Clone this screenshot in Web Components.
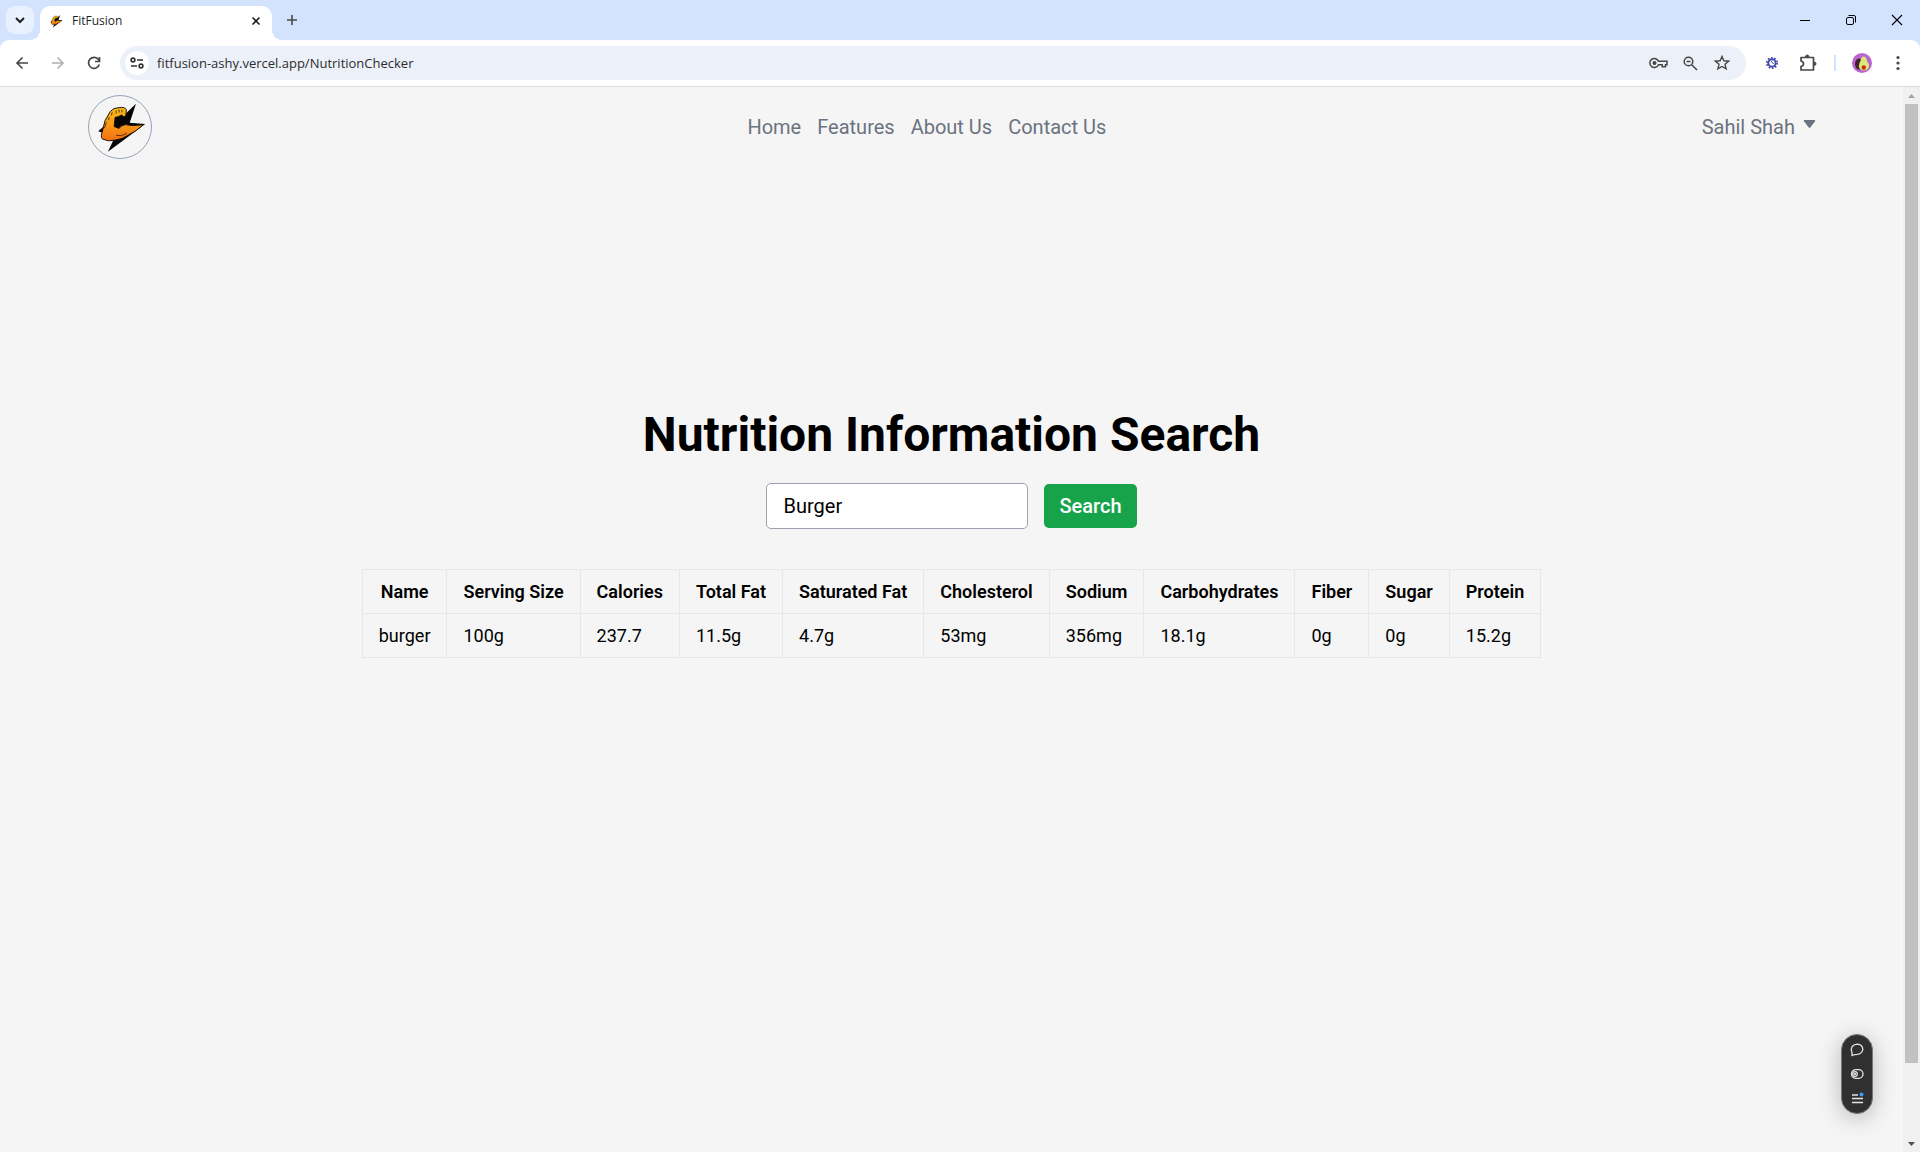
<!DOCTYPE html>
<html lang="en">
<head>
<meta charset="utf-8">
<title>FitFusion</title>
<style>
  html, body { height: 100%; }
  body { margin: 0; background: #f5f5f5; font-family: Roboto, "Liberation Sans", sans-serif; font-size: 18px; line-height: 27px; color: #000; overflow: hidden; }
</style>
</head>
<body>
<browser-window>
  <tab-strip slot="tabs" label="FitFusion"></tab-strip>
  <tool-bar slot="toolbar" address="fitfusion-ashy.vercel.app/NutritionChecker"></tool-bar>
  <site-header user="Sahil Shah">
    <a href="#home">Home</a>
    <a href="#features">Features</a>
    <a href="#about">About Us</a>
    <a href="#contact">Contact Us</a>
  </site-header>
  <nutrition-search query="Burger">Nutrition Information Search</nutrition-search>
  <floating-tools slot="overlay"></floating-tools>
</browser-window>

<script>
const define = (name, html, setup) => {
  const template = document.createElement('template');
  template.innerHTML = html;
  customElements.define(name, class extends HTMLElement {
    constructor() {
      super();
      this.attachShadow({ mode: 'open' }).append(template.content.cloneNode(true));
    }
    connectedCallback() { if (setup) setup(this, this.shadowRoot); }
  });
};

const reset = `:host, *, *::before, *::after { box-sizing: border-box; }
  button { border: 0; padding: 0; margin: 0; background: none; font: inherit; color: inherit; display: flex; align-items: center; justify-content: center; }
  svg { display: block; }`;

define('bolt-logo', `
<style>:host { display: block; } svg { display: block; width: 100%; height: 100%; }</style>
<svg viewBox="0 0 64 64" aria-hidden="true">
  <path d="M48.500 8 38 18 26 22 25 33 15 31.500 9.500 36.500 14 38 18 45 25 46 19.500 57.500 46 38 58 29 42 27.500Z" fill="#050505"/>
  <defs><linearGradient id="g" x1="0" y1="0" x2="0" y2="1"><stop offset="0" stop-color="#f5bd1d"/><stop offset=".5" stop-color="#f79a18"/><stop offset="1" stop-color="#f26f12"/></linearGradient></defs>
  <path d="M22 16Q25 12 31 12 37 11 38.500 14L38 20.500 35.500 21.500 34 19.500 30 21.500 27 22 26.500 26 26 31.500 31 33.500Q33 30 38 29.500 42 30.500 46 30.500L56 29.700Q48 37 42 39.500 34 45 27 45.500 20 47.500 14 44.500 11.500 42 14 36 15 25 22 16Z" fill="url(#g)" stroke="#1c0f02" stroke-width="1"/>
  <path d="M28 40.500Q33 42.500 39 38.500M18 27 16 33M31 14V17M34 14V17M24 17 23 20M21 22 20 25M28 15V18" fill="none" stroke="#5c2c04" stroke-width="1"/>
</svg>`);

define('browser-window', `
<style>${reset}
  :host { display: flex; flex-direction: column; height: 100vh; }
  .chrome { background: #d3e3fd; }
  .view { flex: 1; min-height: 0; display: flex; }
  .page { flex: 1; min-width: 0; overflow: hidden; }
</style>
<div class="chrome"><slot name="tabs"></slot><slot name="toolbar"></slot></div>
<div class="view"><div class="page"><slot></slot></div><scroll-rail></scroll-rail></div>
<slot name="overlay"></slot>`);

define('tab-strip', `
<style>${reset}
  :host { display: flex; height: 40px; padding-left: 6px; align-items: flex-end; font: 12px/16px "Open Sans", "Noto Sans", sans-serif; color: #1f1f1f; }
  .menu { width: 28px; height: 28px; border-radius: 9px; background: #e9f0fe; margin-bottom: 6px; }
  .tab { position: relative; width: 232px; height: 34px; margin-left: 6px; padding: 0 9px 4px 8px; display: flex; align-items: center; background: #fff; border-radius: 10px 10px 0 0; }
  .tab::before, .tab::after { content: ""; position: absolute; bottom: 0; width: 10px; height: 10px; }
  .tab::before { right: 100%; background: radial-gradient(circle at 0 0, transparent 10px, #fff 10px); }
  .tab::after { left: 100%; background: radial-gradient(circle at 100% 0, transparent 10px, #fff 10px); }
  bolt-logo { width: 16px; height: 16px; margin-right: 8px; }
  .title { flex: 1; }
  .tab button { width: 14px; height: 14px; }
  .new { width: 28px; height: 28px; margin: 0 auto 6px 6px; }
  .win { display: flex; height: 40px; }
  .win button { width: 46px; height: 40px; }
</style>
<button class="menu" aria-label="Search tabs"><svg width="10" height="8" viewBox="0 0 10 8" fill="none" stroke="#1f1f1f" stroke-width="2"><path d="M1 2l4 4 4-4"/></svg></button>
<div class="tab"><bolt-logo></bolt-logo><span class="title"></span>
  <button aria-label="Close tab"><svg width="10" height="10" viewBox="0 0 10 10" stroke="#1f1f1f" stroke-width="1.600"><path d="M1.500 1.500l7 7M8.500 1.500l-7 7"/></svg></button></div>
<button class="new" aria-label="New tab"><svg width="12" height="12" viewBox="0 0 12 12" stroke="#474747" stroke-width="1.600"><path d="M6 1v10M1 6h10"/></svg></button>
<div class="win">
  <button aria-label="Minimize"><svg width="10" height="10" viewBox="0 0 10 10" fill="#000"><path d="M0 5h10v1H0z"/></svg></button>
  <button aria-label="Restore"><svg width="10" height="10" viewBox="0 0 10 10" fill="none" stroke="#000"><rect x=".5" y="2.500" width="7" height="7" rx="1.500"/><path d="M2.500.500H8Q9.500.500 9.500 2v5.500"/></svg></button>
  <button aria-label="Close"><svg width="12" height="12" viewBox="0 0 12 12" stroke="#000" stroke-width="1.100"><path d="M1 1l10 10M11 1L1 11"/></svg></button>
</div>`, (host, root) => { root.querySelector('.title').textContent = host.getAttribute('label'); });

define('tool-bar', `
<style>${reset}
  :host { display: flex; align-items: center; height: 47px; padding: 0 4px; background: #fff; border-bottom: 1px solid #dcdcdc; border-radius: 9px 9px 0 0; }
  button { width: 36px; height: 34px; }
  .pill { flex: 1; height: 34px; margin: 0 8px; display: flex; align-items: center; background: #ecf0f9; border-radius: 17px; padding: 0 8px 0 5px; }
  .site { width: 24px; height: 24px; border-radius: 50%; background: #fff; }
  input { flex: 1; min-width: 0; height: 24px; padding: 0; margin-left: 8px; border: 0; outline: 0; background: none; color: #2c2c2c; font: 13px/24px "Open Sans", "Noto Sans", sans-serif; }
  .pill .act { width: 32px; }
  .sep { width: 2px; height: 16px; background: #d3e3fd; margin: 0 8px; }
</style>
<button aria-label="Back"><svg width="14" height="14" viewBox="0 0 14 14" fill="none" stroke="#474747" stroke-width="1.600"><path d="M13 7H2M7.500 1.500L2 7l5.500 5.500"/></svg></button>
<button aria-label="Forward"><svg width="14" height="14" viewBox="0 0 14 14" fill="none" stroke="#b0b0b0" stroke-width="1.600"><path d="M1 7h11M6.500 1.500L12 7l-5.500 5.500"/></svg></button>
<button aria-label="Reload"><svg width="14" height="14" viewBox="0 0 14 14" fill="none" stroke="#474747" stroke-width="1.700"><path d="M12.300 8.500A5.500 5.500 0 1 1 11.500 3.600L12 4.500M12.500 1v4.500H8"/></svg></button>
<div class="pill">
  <button class="site" aria-label="Site information"><svg width="14" height="12" viewBox="0 0 14 12" fill="none" stroke="#333" stroke-width="1.600"><circle cx="3" cy="3" r="1.900"/><path d="M7 3h6M1 9h6"/><circle cx="11" cy="9" r="1.900"/></svg></button>
  <input type="text" aria-label="Address" spellcheck="false">
  <button class="act" aria-label="Passwords"><svg width="19" height="12" viewBox="0 0 19 12" fill="none" stroke="#474747" stroke-width="1.500"><path d="M9.500 4.300H18V7.700H16.500V9.700H13.200V7.700H9.500A4.500 4.500 0 1 1 9.500 4.300Z"/><circle cx="5.500" cy="6" r="1.300" fill="#474747"/></svg></button>
  <button class="act" aria-label="Zoom"><svg width="15" height="15" viewBox="0 0 15 15" fill="none" stroke="#474747" stroke-width="1.500"><circle cx="5.500" cy="5.500" r="4.300"/><path d="M8.700 8.700L14 14M3.500 5.500h4"/></svg></button>
  <button class="act" aria-label="Bookmark"><svg width="16" height="16" viewBox="0 0 16 16" fill="none" stroke="#474747" stroke-width="1.400"><path d="M8 1.500l1.900 4.300 4.700.400-3.600 3.100 1.100 4.600L8 11.500l-4.100 2.400L5 9.300 1.400 6.200l4.700-.400z"/></svg></button>
</div>
<button aria-label="Extension"><svg width="14" height="14" viewBox="0 0 14 14" fill="none" stroke="#4047ad"><circle cx="7" cy="7" r="3.700" stroke-width="2"/><circle cx="7" cy="7" r="5.300" stroke-width="1.600" stroke-dasharray="1.650 1.680"/><path d="M6 5l2.500 3" stroke-width="1"/></svg></button>
<button aria-label="Extensions"><svg width="18" height="18" viewBox="0 0 18 18" fill="none" stroke="#474747" stroke-width="1.700"><path d="M2 3.500H14.500V16H2V12.500Q4.500 12 4.500 9.800T2 7Z" stroke-linejoin="round"/><path d="M6.500 3Q6.500 1 8.200 1T10 3M15 8Q17 8 17 9.700T15 11.500" fill="#474747" stroke-width="1"/></svg></button>
<div class="sep"></div>
<button aria-label="Profile"><svg width="20" height="20" viewBox="0 0 20 20"><circle cx="10" cy="10" r="10" fill="#b866cc"/><ellipse cx="7" cy="11" rx="4" ry="5.500" fill="#40212b"/><path d="M12 3.500Q14.500 4 15 8 18 12 16.500 15 15 17.500 11.500 17.500 7.500 17 6.800 13.500 7 10 8.500 8 9 3.500 12 3.500Z" fill="#dce77b"/><circle cx="11.800" cy="14.500" r="2.200" fill="#ce2b0d"/></svg></button>
<button aria-label="Menu"><svg width="4" height="16" viewBox="0 0 4 16" fill="#474747"><circle cx="2" cy="2.500" r="1.600"/><circle cx="2" cy="8" r="1.600"/><circle cx="2" cy="13.500" r="1.600"/></svg></button>`,
(host, root) => { root.querySelector('input').value = host.getAttribute('address'); });

define('scroll-rail', `
<style>
  :host { display: flex; flex-direction: column; width: 17px; background: #f0f0f0; align-items: center; }
  svg { display: block; flex: none; }
  .track { flex: 1; width: 13px; }
  .thumb { height: 93%; background: #c1c1c1; }
</style>
<svg width="17" height="17" viewBox="0 0 17 17" fill="#a3a3a3"><path d="M5 11 8.500 7l3.500 4z"/></svg>
<div class="track"><div class="thumb"></div></div>
<svg width="17" height="17" viewBox="0 0 17 17" fill="#505050"><path d="M5 7h7l-3.500 4z"/></svg>`);

define('site-header', `
<style>${reset}
  :host { display: flex; align-items: center; justify-content: space-between; height: 80px; padding: 0 87px 0 88px; font-size: 20px; line-height: 28px; color: #6b7280; }
  .logo { width: 64px; height: 64px; border: 1px solid #94a3b8; border-radius: 50%; overflow: hidden; display: block; }
  nav { display: flex; gap: 16px; }
  ::slotted(a) { color: inherit; text-decoration: none; }
  .user { gap: 8px; align-items: flex-start; }
  .user svg { margin-top: 6px; }
</style>
<a class="logo" href="#home" aria-label="FitFusion"><bolt-logo></bolt-logo></a>
<nav><slot></slot></nav>
<button class="user"><span></span><svg width="13" height="10" viewBox="0 0 13 10" fill="#6b7280"><path d="M1.500 1h10Q12.800 1 12 2.300L7.500 8.200Q6.500 9.200 5.500 8.200L1 2.300Q.200 1 1.500 1Z"/></svg></button>`,
(host, root) => { root.querySelector('.user span').textContent = host.getAttribute('user'); });

define('nutrition-table', `
<style>
  :host { display: block; }
  table { border-collapse: collapse; font-size: 18px; line-height: 27px; }
  th, td { border: 1px solid #e5e7eb; padding: 8px 16px; text-align: left; font-weight: 400; }
  th { font-weight: 600; text-align: center; }
</style>
<table><thead><tr></tr></thead><tbody><tr></tr></tbody></table>`,
(host, root) => {
  const facts = [['Name', 'burger'], ['Serving Size', '100g'], ['Calories', '237.7'], ['Total Fat', '11.5g'],
    ['Saturated Fat', '4.7g'], ['Cholesterol', '53mg'], ['Sodium', '356mg'], ['Carbohydrates', '18.1g'],
    ['Fiber', '0g'], ['Sugar', '0g'], ['Protein', '15.2g']];
  const [head, body] = root.querySelectorAll('tr');
  for (const [name, value] of facts) {
    head.appendChild(document.createElement('th')).textContent = name;
    body.appendChild(document.createElement('td')).textContent = value;
  }
});

define('nutrition-search', `
<style>${reset}
  :host { display: flex; flex-direction: column; align-items: center; padding-top: 240px; }
  h1 { margin: 0; font-size: 48px; line-height: 56px; font-weight: 700; }
  form { display: flex; align-items: center; gap: 16px; margin: 20px 0 40px; font-size: 20px; line-height: 28px; }
  input { width: 262px; height: 46px; padding: 0 16px; border: 1px solid #9ca3af; border-radius: 5px; background: #fff; color: #000; font: inherit; }
  form button { height: 44px; padding: 0 15px; border-radius: 5px; background: #16a34a; color: #fff; font-weight: 500; }
</style>
<h1><slot></slot></h1>
<form><input type="text" aria-label="Food"><button type="button">Search</button></form>
<nutrition-table></nutrition-table>`,
(host, root) => { root.querySelector('input').value = host.getAttribute('query'); });

define('floating-tools', `
<style>${reset}
  :host { position: fixed; right: 47px; bottom: 38px; width: 32px; height: 80px; border-radius: 16px; background: #303030; border: 1px solid #777; box-shadow: 0 4px 22px rgba(0,0,0,.25); display: flex; flex-direction: column; align-items: center; justify-content: center; gap: 2px; }
  button { width: 24px; height: 22px; }
</style>
<button aria-label="Comment"><svg width="14" height="14" viewBox="0 0 14 14" fill="none" stroke="#e4e4e4" stroke-width="1.300"><path d="M2 12.500V9.500Q.500 6.500 2.200 3.500 4 1.200 7.500 1.200 12.500 1.700 12.800 6.200 12.500 10.500 7.500 11.300 5 11.300 2 12.500Z"/></svg></button>
<button aria-label="Toggle view"><svg width="14" height="12" viewBox="0 0 14 12" fill="none" stroke="#e4e4e4" stroke-width="1.300"><rect x="1.500" y="1.700" width="11.500" height="8.600" rx="4.300"/><circle cx="5" cy="6" r="2.300"/><circle cx="5" cy="6" r=".5"/></svg></button>
<button aria-label="Menu"><svg width="14" height="12" viewBox="0 0 14 12" fill="none" stroke="#e4e4e4" stroke-width="1.300"><path d="M2 3h6M2 6.500h11M2 10.500h11"/><circle cx="11.500" cy="2.500" r="2" fill="#3b9bff" stroke="none"/></svg></button>`);
</script>
</body>
</html>
